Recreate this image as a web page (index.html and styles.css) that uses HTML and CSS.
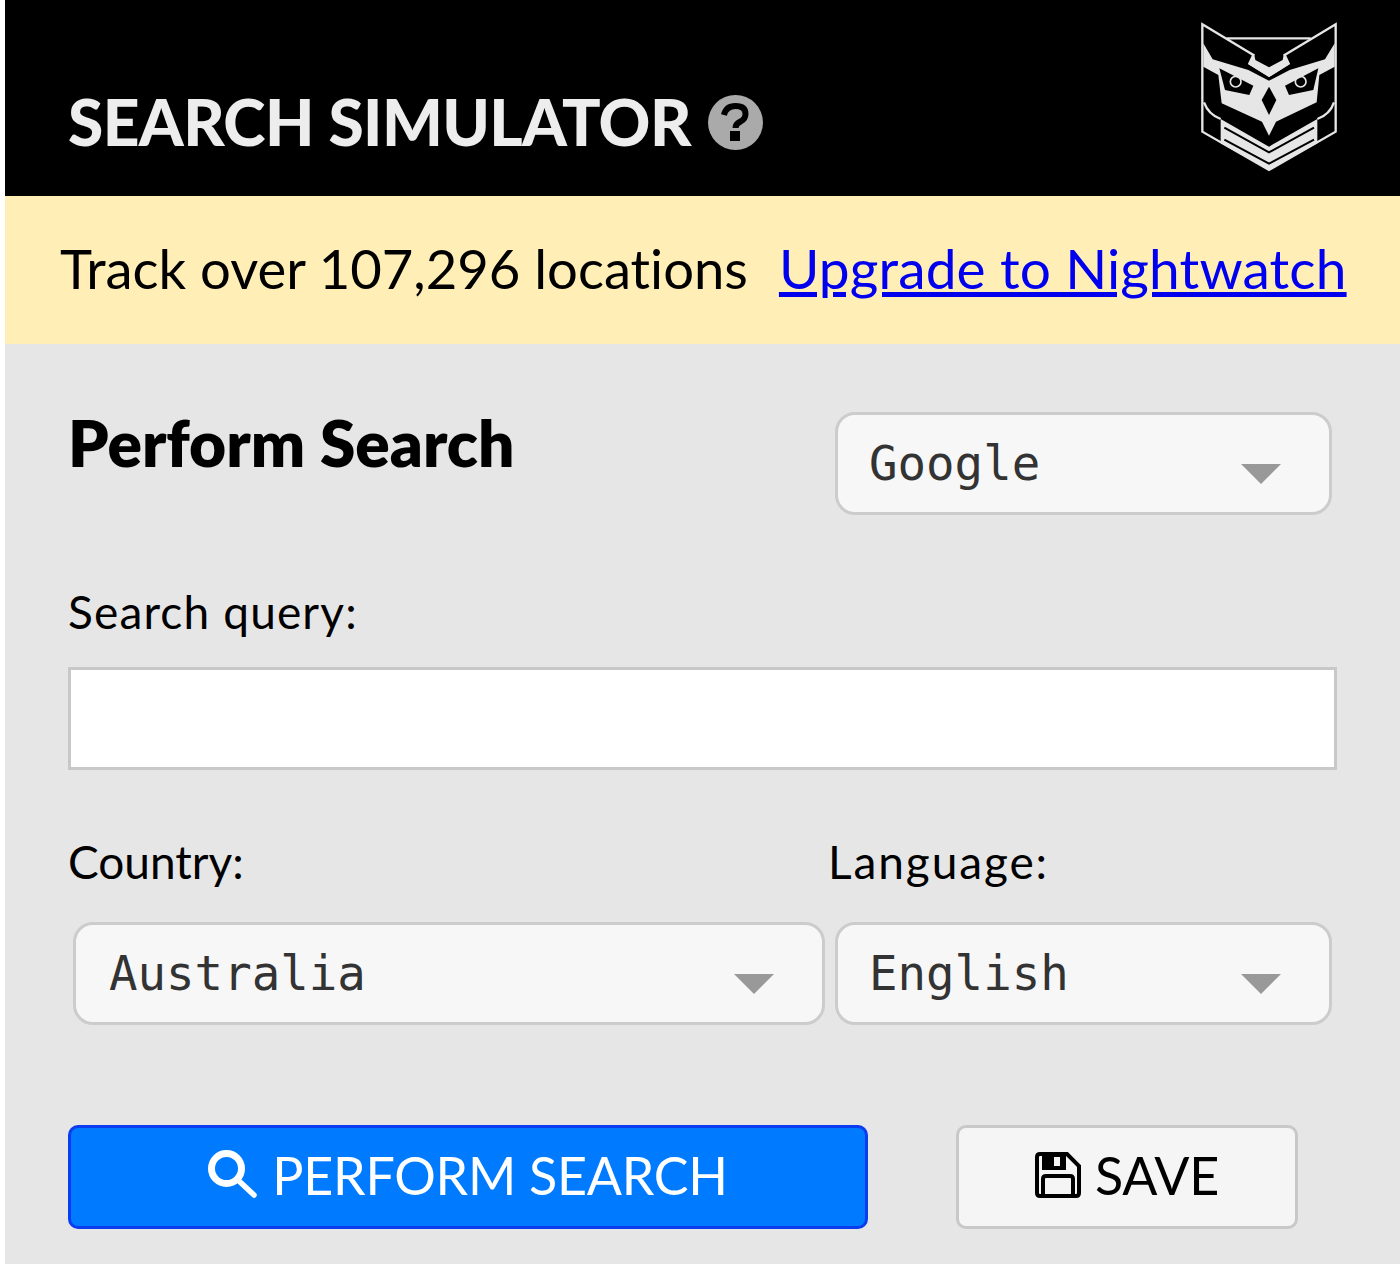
FILE: index.html
```html
<!DOCTYPE html>
<html lang="en">
<head>
<meta charset="utf-8">
<title>Search Simulator</title>
<link rel="stylesheet" href="styles.css">
</head>
<body>
<div class="app">
  <header class="topbar">
    <div class="title-wrap">
      <h1 class="title">SEARCH SIMULATOR</h1>
      <svg class="help" viewBox="0 0 55 55" aria-label="Help">
        <circle class="help-disc" cx="27.5" cy="27.5" r="27.5"/>
        <path class="help-mark" d="M16 20Q18 11 27.5 11Q37.5 11 37.5 19Q37.5 24 32.5 26.5Q27.5 29 27.5 33"/>
        <rect class="help-dot" x="22" y="36" width="10" height="10"/>
      </svg>
    </div>
    <svg class="logo" viewBox="0 0 480 495" aria-label="Owl logo">
      <path class="logo-line" d="M37 28L190 120L178 146L237 182L296 146L284 120L437 28V350L237 465L37 350Z"/>
      <path class="logo-line" d="M110 70H362"/>
      <path class="logo-fill" d="M192 115L196 135L237 157L278 135L282 115L298 148L237 186L176 148Z"/>
      <path class="logo-fill" d="M40 85L68 133L175 165L237 197L299 165L405 133L434 85V155L388 180L380 262L258 320L237 362L216 320L95 265L85 180L40 155Z"/>
      <path class="logo-dark" d="M88 160L190 212L178 240L105 225Z"/>
      <path class="logo-dark" d="M385 160L285 212L297 240L370 225Z"/>
      <circle class="logo-eye" cx="137" cy="200" r="16"/>
      <circle class="logo-eye" cx="332" cy="200" r="16"/>
      <path class="logo-dark" d="M237 215L259 255L237 300L215 255Z"/>
      <path class="logo-fill" d="M92 312L237 395L382 312V385L237 465L92 385Z"/>
      <path class="logo-cut" d="M103 338L237 412L372 338M103 374L237 446L372 374"/>
      <path class="logo-line" d="M42 262Q55 298 92 312M432 262Q420 298 382 312"/>
    </svg>
  </header>
  <div class="notice">
    <span class="notice-text">Track over 107,296 locations</span>
    <a class="notice-link" href="#">Upgrade to Nightwatch</a>
  </div>
  <main class="panel">
    <div class="columns">
      <h2 class="panel-title">Perform Search</h2>
      <div class="select-box"><span class="select-value select-value-tight">Google</span><i class="caret"></i></div>
    </div>
    <label class="label label-query" for="q">Search query:</label>
    <input class="query" id="q" type="text">
    <div class="columns locale-labels">
      <span class="label">Country:</span>
      <span class="label label-language">Language:</span>
    </div>
    <div class="columns locale-selects">
      <div class="select-box"><span class="select-value">Australia</span><i class="caret"></i></div>
      <div class="select-box"><span class="select-value select-value-tight">English</span><i class="caret"></i></div>
    </div>
    <div class="actions">
      <button class="btn btn-primary" type="button">
        <svg class="icon-search" viewBox="0 0 50 50"><circle cx="18.5" cy="18.5" r="15"/><path class="search-handle" d="M31 31L46 45"/></svg>
        <span>PERFORM SEARCH</span>
      </button>
      <button class="btn btn-save" type="button">
        <svg class="icon-save" viewBox="0 0 46 46">
          <path class="save-outline" d="M5 2H32L44 14V41Q44 44 41 44H5Q2 44 2 41V5Q2 2 5 2Z"/>
          <path class="save-shutter" fill-rule="evenodd" d="M7 2H31V18H7ZM19 5V14H25V5Z"/>
          <path class="save-outline" d="M8 44V27Q8 24 11 24H35Q38 24 38 27V44"/>
        </svg>
        <span>SAVE</span>
      </button>
    </div>
  </main>
</div>
</body>
</html>
```
FILE: styles.css
```css
* { box-sizing: border-box; }
html, body { margin: 0; padding: 0; background: #fff; }
body { font-family: "Lato", "Liberation Sans", sans-serif; color: #000; font-variant-ligatures: none; }
.app { margin-left: 5px; height: 1264px; display: flex; flex-direction: column; overflow: hidden; }

.topbar {
  height: 196px; background: #000;
  display: flex; justify-content: space-between; align-items: flex-start;
  padding: 15px 50px 0 63px;
}
.title-wrap { display: flex; align-items: center; gap: 17px; margin-top: 52px; height: 110px; }
.title { margin: 0; font-size: 64px; line-height: 1; font-weight: 900; color: #ededed; letter-spacing: -0.6px; white-space: nowrap; }
.help { width: 55px; height: 55px; display: block; flex: none; }
.help-disc { fill: #aaa; }
.help-mark { fill: none; stroke: #000; stroke-width: 6; }
.help-dot { fill: #000; }
.logo { width: 160px; height: 165px; display: block; }
.logo-line { fill: none; stroke: #e6e6e6; stroke-width: 7; stroke-linejoin: miter; }
.logo-fill { fill: #e6e6e6; }
.logo-dark { fill: #000; }
.logo-eye { fill: none; stroke: #e6e6e6; stroke-width: 5; }
.logo-cut { fill: none; stroke: #000; stroke-width: 6; }

.notice {
  height: 148px; background: #ffeeb5;
  display: flex; align-items: center; gap: 31px;
  padding: 0 0 4px 55px; white-space: nowrap;
}
.notice-text { font-size: 54.4px; }
.notice-link { font-size: 55px; letter-spacing: 0.15px; color: #0000ee; text-decoration: underline; }

.panel { flex: 1; background: #e6e6e6; padding: 68px 63px 0 63px; }
.columns { display: grid; grid-template-columns: 762px 507px; }
.panel-title { margin: 0; font-size: 64px; line-height: 62px; font-weight: 800; letter-spacing: 0; }
.select-box {
  height: 103px; margin: 0 5px;
  border: 3px solid #ccc; border-radius: 20px; background: #f7f7f7;
  display: flex; align-items: center; justify-content: space-between;
  padding: 0 48px 0 33px;
}
.select-value { font-family: "DejaVu Sans Mono", monospace; font-size: 47.4px; color: #333; }
.select-value-tight { margin-left: -2px; }
.caret { width: 0; height: 0; border-left: 20px solid transparent; border-right: 20px solid transparent; border-top: 20px solid #999; margin-top: 20px; }
.label { display: block; font-size: 46px; line-height: 50px; }
.label-query { margin-top: 72px; letter-spacing: 1.15px; }
.label-language { margin-left: -2px; letter-spacing: 1.9px; }
.query { display: block; width: 100%; height: 103px; margin-top: 30px; border: 3px solid #c8c8c8; background: #fff; border-radius: 0; outline: none; }
.locale-labels { margin-top: 67px; }
.locale-selects { margin-top: 35px; }
.actions { display: flex; gap: 88px; margin-top: 100px; }
.btn {
  height: 104px; border-radius: 10px; border: 3px solid;
  display: flex; align-items: center; justify-content: center; gap: 14px;
  font-family: inherit; font-size: 52px; letter-spacing: -0.25px; padding: 0 0 5px;
}
.btn-primary { width: 800px; background: #007bff; border-color: #0b3cf0; color: #fff; }
.btn-save { width: 342px; background: #f5f5f5; border-color: #c8c8c8; color: #000; }
.icon-search { width: 50px; height: 50px; fill: none; stroke: #fff; stroke-width: 7; stroke-linecap: round; }
.search-handle { stroke-width: 5.5; }
.icon-save { width: 46px; height: 46px; }
.save-outline { fill: none; stroke: #000; stroke-width: 4; }
.save-shutter { fill: #000; }
```
